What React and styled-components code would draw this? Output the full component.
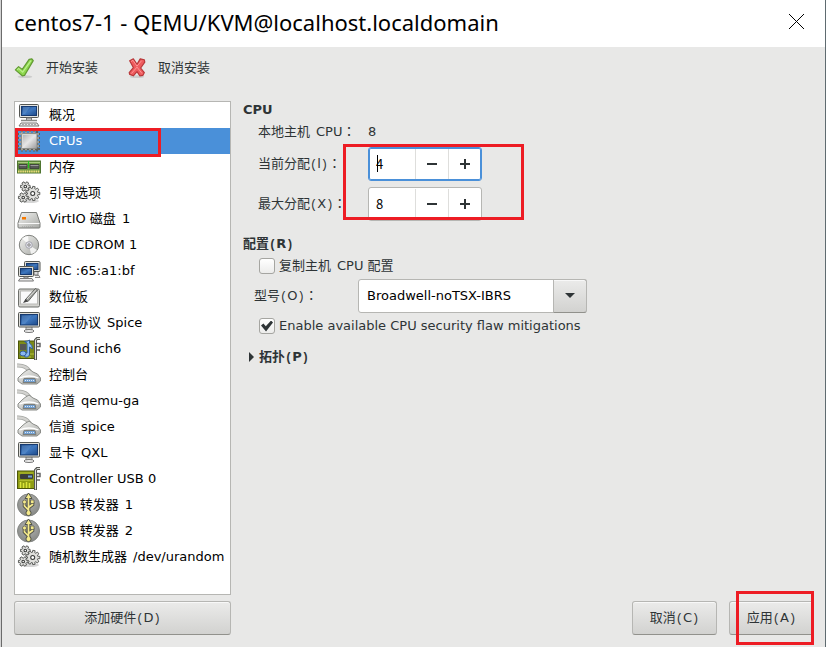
import React, { useState } from "react";
import styled, { createGlobalStyle, css } from "styled-components";

const GlobalStyle = createGlobalStyle`
  * { box-sizing: border-box; }
  body { margin: 0; background: #e8e8e7; }
  button, input, select { font: inherit; color: inherit; margin: 0; }
`;

const sans = `"DejaVu Sans", "Noto Sans CJK SC", sans-serif`;

const Window = styled.div`
  min-height: 100vh;
  display: flex;
  flex-direction: column;
  background: #e8e8e7;
  border-right: 1px solid #5f6b70;
  box-shadow: inset 1px 0 #d4d4d4, inset 2px 0 #6b6b6b;
  font: 13px/18px ${sans};
  color: #2e3436;
`;

const TitleBar = styled.header`
  height: 47px;
  margin-left: 2px;
  padding: 0 20px 4px 12px;
  display: flex;
  align-items: center;
  justify-content: space-between;
  background: #fff;
  color: #000;
`;

const Title = styled.h1`
  margin: 0;
  font: 400 22px/30px "Noto Sans", sans-serif;
`;

const CloseButton = styled.button`
  display: flex;
  padding: 0;
  border: 0;
  background: none;
`;

const Toolbar = styled.div`
  display: flex;
  gap: 28px;
  height: 42px;
  padding: 0 0 1px 14px;
  align-items: center;
`;

const ToolButton = styled.button`
  display: flex;
  align-items: center;
  gap: 10px;
  padding: 0;
  border: 0;
  background: none;
`;

const Body = styled.main`
  flex: 1;
  display: grid;
  grid-template-columns: 217px 1fr;
  column-gap: 12px;
  padding: 12px 11px 12px 14px;
`;

const Sidebar = styled.div`
  display: flex;
  flex-direction: column;
  gap: 6px;
`;

const DeviceList = styled.ul`
  flex: 1;
  position: relative;
  margin: 0;
  padding: 0;
  list-style: none;
  border: 1px solid #b6b6b3;
  background: #fff;
  color: #000;
`;

const DeviceRow = styled.button`
  display: flex;
  align-items: center;
  gap: 8px;
  width: 100%;
  height: 26px;
  padding: 0 0 0 2px;
  border: 0;
  text-align: left;
  white-space: nowrap;
  background: ${(p) => (p.$selected ? "#4a90d9" : "transparent")};
  color: ${(p) => (p.$selected ? "#fff" : "#000")};
`;

const Half = styled.span`
  font-family: "Liberation Mono", monospace;
  font-size: 12px;
  line-height: 1;
`;

const HalfSpace = styled(Half)`
  font-size: 10px;
`;

const Colon = styled.span`
  font-family: "Noto Sans CJK TC", sans-serif;
  line-height: 1;
`;

const raised = css`
  border: 1px solid #b6b6b3;
  border-bottom-color: #91918c;
  border-radius: 3px;
  background: linear-gradient(#ebebea, #d2d2d0);
  box-shadow: inset 0 1px #f8f8f8;
`;

const Button = styled.button`
  ${raised}
  height: 34px;
  min-width: 85px;
  padding: 0 15px;
`;

const Details = styled.section`
  display: flex;
  flex-direction: column;
`;

const Heading = styled.h2`
  margin: 0;
  font: 700 13px/18px ${sans};
`;

const CpuGrid = styled.div`
  position: relative;
  display: grid;
  grid-template-columns: 110px max-content;
  grid-template-rows: 22px 34px 34px;
  row-gap: 6px;
  align-items: center;
  margin: 0 0 14px 15px;
  & > :nth-child(-n + 2) { padding-top: 4px; }
`;

const Spin = styled.div`
  position: relative;
  display: flex;
  height: 34px;
  width: 114px;
  border: 1px solid ${(p) => (p.$focused ? "#4a90d9" : "#b6b6b3")};
  border-radius: 3px;
  background: #fff;
  box-shadow: ${(p) => (p.$focused ? "inset 0 0 0 1px #4a90d9" : "none")};
`;

const SpinInput = styled.input`
  flex: 1;
  min-width: 0;
  padding: 0 0 0 7px;
  border: 0;
  outline: 0;
  background: none;
  color: #000;
  font-family: "Noto Sans CJK SC", sans-serif;
`;

const SpinButton = styled.button`
  width: 33px;
  margin: 1px 0;
  display: flex;
  align-items: center;
  justify-content: center;
  padding: 0;
  border: 0;
  border-left: 1px solid #dededc;
  background: none;
`;

const Caret = styled.span`
  position: absolute;
  left: 8px;
  top: 7px;
  width: 1px;
  height: 17px;
  background: #000;
`;

const CheckLabel = styled.label`
  display: flex;
  align-items: center;
  gap: 4px;
  height: 18px;
  margin-left: 16px;
`;

const CheckBox = styled.input`
  appearance: none;
  width: 16px;
  height: 16px;
  margin: 0;
  border: 1px solid #a5a5a1;
  border-radius: 3px;
  background: linear-gradient(#fff, #ececeb);
  display: grid;
  place-items: center;
  &:checked::after {
    content: "";
    width: 12px;
    height: 11px;
    background: #2e3436;
    clip-path: polygon(0 45%, 20% 27%, 40% 52%, 84% 0, 100% 18%, 42% 100%);
  }
`;

const Config = styled.div`
  display: flex;
  flex-direction: column;
  padding-top: 4px;
`;

const ModelRow = styled.div`
  display: grid;
  grid-template-columns: 104px 229px;
  align-items: center;
  margin: 4px 0 4px 11px;
`;

const Combo = styled.div`
  display: grid;
  grid-template-columns: 1fr 34px;
  height: 34px;
`;

const ComboSelect = styled.select`
  grid-area: 1 / 1 / 2 / 3;
  appearance: none;
  padding: 0 36px 0 8px;
  border: 1px solid #b6b6b3;
  border-radius: 3px;
  background: #fff;
  color: #000;
`;

const ComboArrow = styled.span`
  ${raised}
  grid-area: 1 / 2;
  border-radius: 0 3px 3px 0;
  pointer-events: none;
  display: flex;
  align-items: center;
  justify-content: center;
`;

const Expander = styled.button`
  display: flex;
  align-items: center;
  gap: 5px;
  align-self: flex-start;
  margin: 13px 0 0 6px;
  padding: 0;
  border: 0;
  background: none;
  font-weight: 700;
`;

const Actions = styled.footer`
  display: flex;
  justify-content: flex-end;
  gap: 12px;
  margin-top: auto;
`;

const ApplyWrap = styled.div`
  position: relative;
  display: flex;
`;

const Marker = styled.span`
  position: absolute;
  border: 3px solid #ed1c24;
  pointer-events: none;
`;
const CpuMarker = styled(Marker)`
  left: 0;
  top: 26px;
  width: 146px;
  height: 29px;
`;
const SpinMarker = styled(Marker)`
  left: 85px;
  top: 25px;
  width: 181px;
  height: 76px;
`;
const ApplyMarker = styled(Marker)`
  right: 0;
  top: -10px;
  width: 78px;
  height: 54px;
`;

/* Brackets and the space that follows a Han character take a half-width cell. */
function Mixed({ text }) {
  return (
    <span>
      {text.split(/([()：]|(?<=[\u4e00-\u9fff]) )/).map((part, i) => {
        if (part === "：") return <Colon key={i}>{part}</Colon>;
        if (part === " ") return <HalfSpace key={i}>{"\u00a0"}</HalfSpace>;
        if (part === "(" || part === ")") return <Half key={i}>{part}</Half>;
        return part;
      })}
    </span>
  );
}

const IconSvg = styled.svg`
  flex: none;
  display: block;
`;

const Svg = ({ size = 24, children }) => (
  <IconSvg width={size} height={size} viewBox="0 0 24 24" fill="none" aria-hidden="true">{children}</IconSvg>
);

const Gradients = () => (
  <IconSvg width="0" height="0" aria-hidden="true">
    <defs>
      <linearGradient id="screen" x1="0" y1="0" x2="1" y2="1">
        <stop offset="0" stopColor="#1c4683" /><stop offset=".5" stopColor="#3f78bf" /><stop offset="1" stopColor="#1e4a8a" />
      </linearGradient>
      <linearGradient id="metal" x1="0" y1="0" x2="1" y2="1">
        <stop offset="0" stopColor="#f4f4f2" /><stop offset="1" stopColor="#a6a8a4" />
      </linearGradient>
      <linearGradient id="chip" x1="0" y1="0" x2="1" y2="1">
        <stop offset="0" stopColor="#a9a9a9" /><stop offset=".5" stopColor="#e6e6e6" /><stop offset="1" stopColor="#999" />
      </linearGradient>
      <radialGradient id="disc" cx=".5" cy=".35" r=".65">
        <stop offset="0" stopColor="#b4b5b3" /><stop offset="1" stopColor="#868885" />
      </radialGradient>
    </defs>
  </IconSvg>
);

const ComputerIcon = () => (
  <Svg>
    <rect x="2.500" y="1.500" width="19" height="13" rx="1" fill="#e4e4e0" stroke="#555753" />
    <rect x="4.500" y="3.500" width="15" height="9" fill="url(#screen)" stroke="#173a70" />
    <path d="M6 4h7l-5 7H6z" fill="#6c9bd3" opacity=".45" />
    <path d="M9.500 15h5v2.500h-5z" fill="#ccc" stroke="#777" />
    <path d="M4 17.500h16" stroke="#888a85" strokeWidth="1.500" />
    <path d="M4 20h16l2 3H2z" fill="#eeeeec" stroke="#777974" />
    <path d="M5 21.500h14" stroke="#aaa" strokeDasharray="2 1" />
  </Svg>
);
const CpuIcon = () => (
  <Svg>
    <path d="M5 1.500v21M9 1.500v21M13 1.500v21M17 1.500v21M20 1.500v21M1 5h22M1 9h22M1 13h22M1 17h22M1 20h22" stroke="#5c5e5b" strokeWidth="2.200" />
    <path d="M5 2.500v19M9 2.500v19M13 2.500v19M17 2.500v19M2 5h20M2 9h20M2 13h20M2 17h20" stroke="#deded8" />
    <rect x="4.500" y="4.500" width="15.500" height="15" rx="1" fill="url(#chip)" stroke="#8d8f8b" />
    <path d="M5.500 18.500v-13H19" stroke="#d9d9d6" />
  </Svg>
);
const MemoryIcon = () => (
  <Svg>
    <rect x=".5" y="6" width="23" height="12" fill="#6f9b45" stroke="#4f7530" />
    <path d="M1 7.500h22" stroke="#a9c97f" />
    <path d="M2 9.500h8v4H2zM13 9.500h9v4h-9z" fill="#565856" stroke="#333" strokeWidth=".7" />
    <path d="M2.500 10.500h7M13.500 10.500h8" stroke="#999" />
    <path d="M11.500 6v7" stroke="#23c323" />
    <path d="M1 16.500h22" stroke="#f0dc7d" strokeWidth="2" strokeDasharray="1.500 .7" />
  </Svg>
);
const gearPath = (teeth, outer, inner) => {
  const step = (Math.PI * 2) / teeth;
  const points = [];
  for (let i = 0; i < teeth; i += 1) {
    [[-0.34, inner], [-0.24, outer], [0.24, outer], [0.34, inner]].forEach(([offset, radius]) => {
      const angle = (i + offset) * step;
      points.push(`${(Math.cos(angle) * radius).toFixed(2)} ${(Math.sin(angle) * radius).toFixed(2)}`);
    });
  }
  return `M${points.join("L")}Z`;
};
const Gear = ({ x, y, outer, inner, teeth }) => (
  <g transform={`translate(${x} ${y})`}>
    <path d={gearPath(teeth, outer, inner)} fill="#e0e0dd" stroke="#4f514e" strokeWidth=".9" strokeLinejoin="round" />
    <circle r={inner * 0.38} fill="#fff" stroke="#3c3e3c" strokeWidth="1.100" />
  </g>
);
const GearsIcon = () => (
  <Svg>
    <ellipse cx="13" cy="20" rx="9" ry="2" fill="#bbb" opacity=".6" />
    <Gear x="15.700" y="12.500" outer={7.2} inner={5.2} teeth={9} />
    <Gear x="8.300" y="5.500" outer={4.9} inner={3.4} teeth={6} />
    <Gear x="6.200" y="16.500" outer={4.9} inner={3.4} teeth={6} />
  </Svg>
);
const DiskIcon = () => (
  <Svg>
    <path d="M4.500 5.500h15L23 16v4q0 1-1 1H2q-1 0-1-1v-4z" fill="url(#metal)" stroke="#7b7d79" />
    <path d="M1.500 16.500h21" stroke="#f9f9f9" />
    <path d="M5 20h12" stroke="#999" strokeDasharray="1 1" />
    <rect x="5" y="10" width="4" height="2.500" fill="#f57900" />
  </Svg>
);
const CdIcon = () => (
  <Svg>
    <circle cx="12" cy="12" r="9.700" fill="url(#metal)" stroke="#7f817d" />
    <path d="M12 12 5 5.500A9 9 0 0 1 11 3zM12 12l8 5a9 9 0 0 1-6 4z" fill="#fff" opacity=".8" />
    <circle cx="12" cy="12" r="3.300" fill="#e5e5ef" stroke="#a5a5ac" />
    <circle cx="12" cy="12" r="1.200" fill="#fff" stroke="#777" />
  </Svg>
);
const NetworkIcon = () => (
  <Svg>
    <path d="M17 12h4v4h-4z" fill="#ddd" stroke="#777" />
    <rect x="7.500" y="2.500" width="15.500" height="10" rx="1" fill="#deded9" stroke="#555753" />
    <rect x="9.500" y="4.500" width="11.500" height="6" fill="url(#screen)" stroke="#173a70" />
    <rect x="1.500" y="7.500" width="15" height="10" rx="1" fill="#deded9" stroke="#555753" />
    <rect x="3.500" y="9.500" width="11" height="6" fill="url(#screen)" stroke="#173a70" />
    <path d="M7 18h4v1.500H7z" fill="#ccc" stroke="#777" />
    <path d="M3 19.500h12l1.500 2.500H1.500z" fill="#eee" stroke="#777" />
    <path d="M18 16.500h4l1 2h-5" fill="#eee" stroke="#888" />
  </Svg>
);
const TabletIcon = () => (
  <Svg>
    <rect x="1.500" y="4" width="21" height="18" rx="1.500" fill="#d3d3cf" stroke="#6d6f6b" />
    <rect x="3.500" y="6" width="17" height="13" fill="#fafafa" stroke="#b9b9b6" />
    <path d="m8.500 14.500 10-11 2 1.500-9.500 11.500z" fill="#a0a29e" stroke="#555753" strokeWidth=".9" />
    <path d="m6 18 2.500-4 2.500 2.500z" fill="#444" /><path d="m10 14 9-9.500" stroke="#e4e4e1" />
  </Svg>
);
const DisplayIcon = () => (
  <Svg>
    <path d="M9 15h6v4H9z" fill="#ccc" stroke="#888" />
    <ellipse cx="12" cy="20" rx="5" ry="1.500" fill="#eee" stroke="#777" />
    <rect x="1.500" y="1.500" width="21" height="14.500" rx="1" fill="#deded9" stroke="#555753" />
    <rect x="3.500" y="3.500" width="17" height="10.500" fill="url(#screen)" stroke="#173a70" />
    <path d="M5 4.500h10L8 13H5z" fill="#6c9bd3" opacity=".4" />
  </Svg>
);
const Bracket = () => (
  <>
    <path d="M18.500 23V3l1.500-1.500h3" stroke="#555753" strokeWidth="3" />
    <path d="M18.500 22.500V3l1.500-1.500h3" stroke="#deded9" />
    <path d="M20 6.500h3v3h-3M20 13h3" stroke="#666" strokeWidth="1.500" />
  </>
);
const SoundIcon = () => (
  <Svg>
    <rect x="1.500" y="4" width="17" height="17.500" fill="#7d8b18" stroke="#4c5608" />
    <rect x="3" y="7" width="6" height="6" fill="#555" />
    <path d="M11 17h6M4 20h10" stroke="#b5c33b" />
    <Bracket />
    <path d="M7.500 4.500Q12 4 12.500 3v3q3 2 3 6l-3-2v8q-1.500 3-4.500 2-2-2 0-4h2V6z" fill="#8ab8f0" stroke="#2a5796" strokeWidth=".9" />
    <ellipse cx="6" cy="16.500" rx="3" ry="2.500" fill="#8ab8f0" stroke="#2a5796" strokeWidth=".9" />
  </Svg>
);
const SerialIcon = () => (
  <Svg>
    <path d="M0 2.500Q9 2 13 8.500" stroke="#a5a7a3" strokeWidth="4" />
    <path d="M0 2.500Q9 2 13 8.500" stroke="#d3d3d0" strokeWidth="2.500" />
    <path d="M8 8.500 12 6l4 3 4.500 2 3 4v3L20 21H5l-4-3v-3l4-4z" fill="url(#metal)" stroke="#8a8c88" />
    <path d="M2.500 15q9.500-4 19 0" stroke="#fff" strokeWidth="1.300" />
    <path d="M7 15.500h11l1 4H6z" fill="#729fcf" stroke="#7b7d79" />
    <path d="M8 17.500h9" stroke="#dbe9fa" strokeDasharray="1 1" />
  </Svg>
);
const CardIcon = () => (
  <Svg>
    <rect x=".5" y="4" width="18" height="17.500" fill="#8f9d14" stroke="#4c5608" />
    <path d="M2 6h14M2 13.500h14" stroke="#b0bb30" />
    <rect x="3" y="7" width="13" height="5" rx="1" fill="#3b3d3b" /><path d="M11 9.500h4" stroke="#729fcf" strokeWidth="2" />
    <path d="M3.500 15v6M6.500 16v5M9.500 15v6M12.500 16v5" stroke="#dbe53a" strokeWidth="1.500" />
    <Bracket />
  </Svg>
);
const UsbIcon = () => (
  <Svg>
    <circle cx="11.500" cy="12" r="11" fill="url(#disc)" stroke="#858784" />
    <g stroke="#50524a" strokeWidth="3.600"><path d="M11.500 4v16M7.500 9v4l4 4M15.500 9v2.500l-4 3" /></g>
    <path d="m11.500 0 3.500 5.500H8z" fill="#f5ea8b" stroke="#50524a" />
    <circle cx="11.500" cy="20" r="2.600" fill="#f5ea8b" stroke="#50524a" />
    <g stroke="#f5ea8b" strokeWidth="1.700"><path d="M11.500 4v16M7.500 9v4l4 4M15.500 9v2.500l-4 3" /></g>
    <circle cx="7.500" cy="9" r="2" fill="#f5ea8b" stroke="#50524a" strokeWidth=".7" />
    <path d="M13.500 7H17v3.500h-3.500z" fill="#f5ea8b" stroke="#50524a" strokeWidth=".7" />
  </Svg>
);

const TickIcon = () => (
  <Svg size={22}>
    <ellipse cx="12" cy="21.500" rx="8" ry="1.500" fill="#ccc" />
    <path d="m1.500 14 3.500-3.500 4 3L16.500 2.500l3-.5 1.500 2L11.500 20l-2.500.5z" fill="#8ed84e" stroke="#639a35" strokeWidth="1.300" strokeLinejoin="round" />
    <path d="m3.500 14 1.500-1.500 4.500 4L18.500 4" stroke="#bdf08f" strokeWidth="1.200" />
  </Svg>
);
const CrossIcon = () => (
  <Svg size={22}>
    <ellipse cx="12" cy="21.500" rx="8" ry="1.500" fill="#ccc" />
    <path d="m4 4 4-2 4 6 3.500-6 4.500 1 .5 2.500L16 12l4 5-1.500 3-3.500.5-3-4.500-4 4.500L4 19l-.5-2L8 11.500z" fill="#ee5b5e" stroke="#b8383a" strokeWidth="1.300" strokeLinejoin="round" />
    <path d="m5.500 5 2-1.500L12 10l5-6M6 18l6-7 5.500 7" stroke="#f99" />
  </Svg>
);

const devices = [
  ["概况", ComputerIcon], ["CPUs", CpuIcon], ["内存", MemoryIcon], ["引导选项", GearsIcon],
  ["VirtIO 磁盘 1", DiskIcon], ["IDE CDROM 1", CdIcon], ["NIC :65:a1:bf", NetworkIcon],
  ["数位板", TabletIcon], ["显示协议 Spice", DisplayIcon], ["Sound ich6", SoundIcon],
  ["控制台", SerialIcon], ["信道 qemu-ga", SerialIcon], ["信道 spice", SerialIcon],
  ["显卡 QXL", DisplayIcon], ["Controller USB 0", CardIcon], ["USB 转发器 1", UsbIcon],
  ["USB 转发器 2", UsbIcon], ["随机数生成器 /dev/urandom", GearsIcon],
];

function SpinBox({ id, initial, focused }) {
  const [value, setValue] = useState(initial);
  return (
    <Spin $focused={focused}>
      <SpinInput id={id} value={value} onChange={(e) => setValue(e.target.value)} />
      {focused && <Caret />}
      <SpinButton type="button" aria-label="减少" onClick={() => setValue(Number(value) - 1)}>
        <svg width="12" height="12"><path d="M1 6h10" stroke="#2e3436" strokeWidth="2" /></svg>
      </SpinButton>
      <SpinButton type="button" aria-label="增加" onClick={() => setValue(Number(value) + 1)}>
        <svg width="12" height="12"><path d="M1 6h10M6 1v10" stroke="#2e3436" strokeWidth="2" /></svg>
      </SpinButton>
    </Spin>
  );
}

export default function App() {
  const [selected, setSelected] = useState(1);
  return (
    <Window>
      <GlobalStyle />
      <Gradients />
      <TitleBar>
        <Title>centos7-1 - QEMU/KVM@localhost.localdomain</Title>
        <CloseButton aria-label="关闭">
          <svg width="17" height="17"><path d="m1 1 15 15M16 1 1 16" stroke="#000" /></svg>
        </CloseButton>
      </TitleBar>
      <Toolbar>
        <ToolButton><TickIcon /><span>开始安装</span></ToolButton>
        <ToolButton><CrossIcon /><span>取消安装</span></ToolButton>
      </Toolbar>
      <Body>
        <Sidebar>
          <DeviceList>
            {devices.map(([name, Icon], i) => (
              <li key={name}>
                <DeviceRow $selected={i === selected} onClick={() => setSelected(i)}>
                  <Icon /><Mixed text={name} />
                </DeviceRow>
              </li>
            ))}
            <CpuMarker as="li" />
          </DeviceList>
          <Button><Mixed text="添加硬件(D)" /></Button>
        </Sidebar>
        <Details>
          <Heading>CPU</Heading>
          <CpuGrid>
            <Mixed text="本地主机 CPU：" /><span>8</span>
            <label htmlFor="current"><Mixed text="当前分配(l)：" /></label>
            <SpinBox id="current" initial="4" focused />
            <label htmlFor="maximum"><Mixed text="最大分配(X)：" /></label>
            <SpinBox id="maximum" initial="8" />
            <SpinMarker />
          </CpuGrid>
          <Heading><Mixed text="配置(R)" /></Heading>
          <Config>
            <CheckLabel>
              <CheckBox type="checkbox" /><Mixed text="复制主机 CPU 配置" />
            </CheckLabel>
            <ModelRow>
              <label htmlFor="model"><Mixed text="型号(O)：" /></label>
              <Combo>
                <ComboSelect id="model" defaultValue="Broadwell-noTSX-IBRS">
                  <option>Broadwell-noTSX-IBRS</option>
                </ComboSelect>
                <ComboArrow><svg width="10" height="6"><path d="M0 0h10L5 5z" fill="#2e3436" /></svg></ComboArrow>
              </Combo>
            </ModelRow>
            <CheckLabel>
              <CheckBox type="checkbox" defaultChecked />
              <span>Enable available CPU security flaw mitigations</span>
            </CheckLabel>
          </Config>
          <Expander aria-expanded="false">
            <svg width="5" height="10"><path d="M0 0v10l5-5z" fill="#2e3436" /></svg>
            <Mixed text="拓扑(P)" />
          </Expander>
          <Actions>
            <Button><Mixed text="取消(C)" /></Button>
            <ApplyWrap>
              <Button><Mixed text="应用(A)" /></Button>
              <ApplyMarker />
            </ApplyWrap>
          </Actions>
        </Details>
      </Body>
    </Window>
  );
}
